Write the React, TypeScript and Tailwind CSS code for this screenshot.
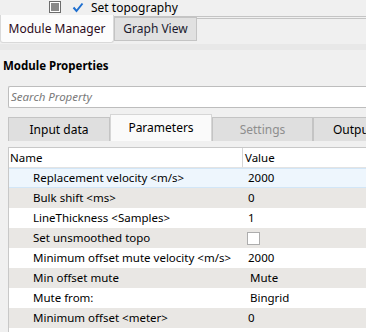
const rows = [
  { name: "Replacement velocity <m/s>", value: "2000", kind: "text" },
  { name: "Bulk shift <ms>", value: "0", kind: "text" },
  { name: "LineThickness <Samples>", value: "1", kind: "text" },
  { name: "Set unsmoothed topo", value: "", kind: "check" },
  { name: "Minimum offset mute velocity <m/s>", value: "2000", kind: "text" },
  { name: "Min offset mute", value: "Mute", kind: "combo" },
  { name: "Mute from:", value: "Bingrid", kind: "combo" },
  { name: "Minimum offset <meter>", value: "0", kind: "text" },
];

export default function App() {
  return (
    <div
      className="h-[332px] w-[366px] overflow-hidden bg-[#f0f0f0] text-[12px] text-black"
      style={{ fontFamily: '"Noto Sans", "Open Sans", sans-serif' }}
    >
      {/* top tree row */}
      <div className="flex h-[15px] items-start">
        <div className="ml-[49px] mt-[1px] flex h-[12px] w-[12px] items-center justify-center border border-[#6d6d6d] bg-white">
          <div className="h-[8px] w-[8px] bg-[#8a8a8a]" />
        </div>
        <svg className="ml-[11px] mt-[2px]" width="12" height="11" viewBox="0 0 12 11">
          <path d="M1.5 5.5 L4.5 9 L10.5 1.5" fill="none" stroke="#1e6fd0" strokeWidth="2" />
        </svg>
        <span className="ml-[7px] text-[12px] leading-[15px]">Set topography</span>
      </div>

      {/* module tabs */}
      <div className="relative flex h-[29px] items-start">
        <div className="absolute left-0 right-0 top-[1px] h-[1px] bg-[#c4c4c4]" />
        <div className="absolute left-0 right-0 top-[3px] h-[1px] bg-[#c4c4c4]" />
        <div className="relative z-10 flex h-[28px] w-[114px] items-center justify-center rounded-b-[3px] border border-t-0 border-[#d9d9d9] bg-[#fcfcfc] text-[12px] text-[#2b0a1a]">
          Module Manager
        </div>
        <div className="relative z-10 mt-[2px] flex h-[24px] w-[83px] items-center justify-center border border-[#c4c4c4] bg-[#e1e1e1] text-[12px] text-[#1a1a2e]">
          Graph View
        </div>
      </div>
      <div className="h-[6px] bg-[#e8e8e8]" />

      <div className="pl-[3px] pt-[8px] text-[11.5px] font-bold leading-[16px]">Module Properties</div>

      {/* search */}
      <div className="ml-[8px] mt-[12px] flex h-[22px] items-center rounded-l-[2px] border border-r-0 border-[#bdbdbd] bg-white pl-[2px] text-[11.5px] italic text-[#7a7a7a]">
        Search Property
      </div>

      {/* property tabs */}
      <div className="ml-[8px] mt-[6px] flex h-[27px] items-end whitespace-nowrap text-[12px]">
        <div className="flex h-[24px] w-[102px] shrink-0 items-center justify-center border border-b-0 border-[#c4c4c4] bg-[#dfdfdf]">
          Input data
        </div>
        <div className="flex h-[27px] w-[102px] shrink-0 items-start justify-center border border-b-0 border-[#d6d6d6] bg-[#fafafa] pt-[4px]">
          Parameters
        </div>
        <div className="flex h-[24px] w-[101px] shrink-0 items-center justify-center border border-b-0 border-[#c4c4c4] bg-[#dfdfdf] text-[#8e8e8e]">
          Settings
        </div>
        <div className="flex h-[24px] w-[80px] shrink-0 items-center justify-center border border-b-0 border-[#c4c4c4] bg-[#dfdfdf]">
          Output
        </div>
      </div>

      {/* table */}
      <div className="ml-[8px] mt-[6px] border-l border-t border-[#c8c8c8] bg-white text-[11.5px]">
        <div className="flex h-[20px] items-center border-b border-[#e3e3e3] bg-white">
          <div className="w-[234px] border-r border-[#d6d6d6] pl-[1px] leading-[19px]">Name</div>
          <div className="pl-[2px]">Value</div>
        </div>
        {rows.map((r, i) => (
          <div
            key={i}
            className={`flex h-[20px] items-center ${
              i === 0
                ? "border-y border-[#d2e6f7] bg-[#eef6fd]"
                : i % 2 === 1
                ? "bg-[#e9e7e4]"
                : "bg-white"
            }`}
          >
            <div className="w-[235px] shrink-0 whitespace-nowrap pl-[24px]">{r.name}</div>
            {r.kind === "check" ? (
              <div className="ml-[3px] h-[13px] w-[13px] border border-[#adadad] bg-white" />
            ) : (
              <div className={r.kind === "combo" ? "pl-[6px]" : "pl-[4px]"}>{r.value}</div>
            )}
          </div>
        ))}
        <div className="h-[10px] bg-white" />
      </div>
    </div>
  );
}
